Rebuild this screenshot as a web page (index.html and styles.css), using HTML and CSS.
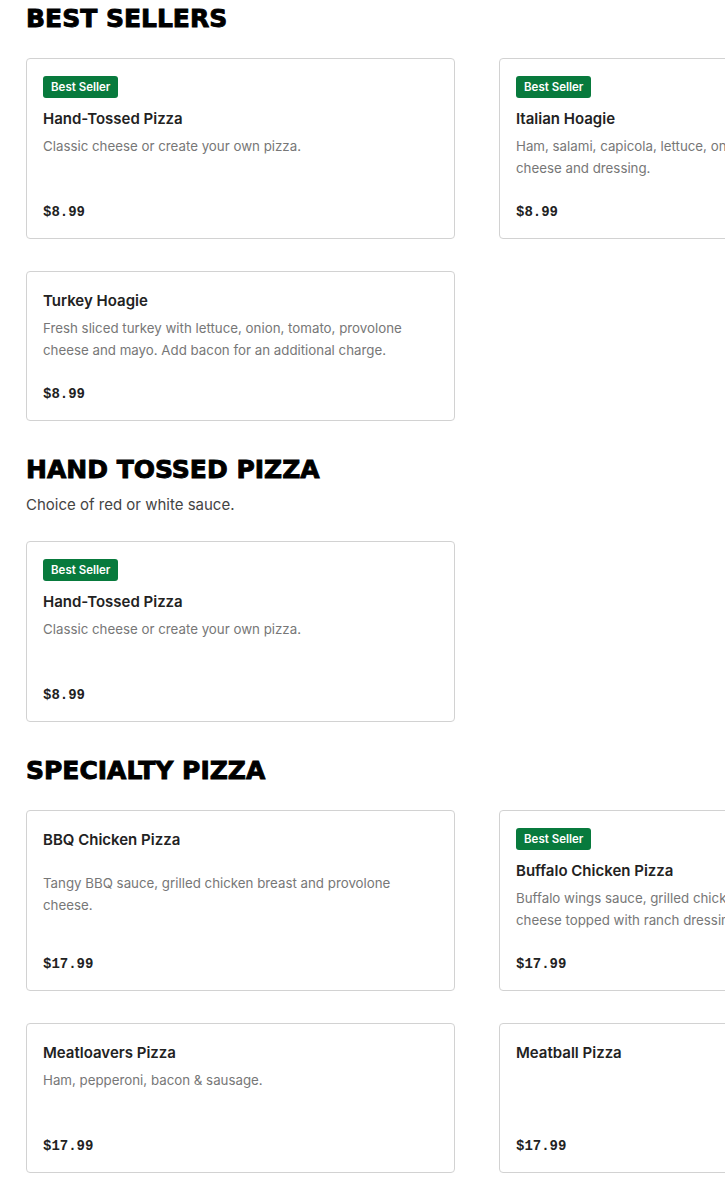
FILE: index.html
```html
<!DOCTYPE html>
<html lang="en">
<head>
<meta charset="utf-8">
<title>Menu</title>
<link rel="stylesheet" href="styles.css">
</head>
<body>
<main class="menu">
  <section class="section">
    <h2 class="section-title">BEST SELLERS</h2>
    <div class="grid">
      <article class="card">
        <span class="badge">Best Seller</span>
        <h3 class="item-name">Hand-Tossed Pizza</h3>
        <p class="item-desc">Classic cheese or create your own pizza.</p>
        <div class="price">$8.99</div>
      </article>
      <article class="card">
        <span class="badge">Best Seller</span>
        <h3 class="item-name">Italian Hoagie</h3>
        <p class="item-desc">Ham, salami, capicola, lettuce, onion, tomato, provolone cheese and dressing.</p>
        <div class="price">$8.99</div>
      </article>
      <article class="card">
        <h3 class="item-name">Turkey Hoagie</h3>
        <p class="item-desc">Fresh sliced turkey with lettuce, onion, tomato, provolone cheese and mayo. Add bacon for an additional charge.</p>
        <div class="price">$8.99</div>
      </article>
    </div>
  </section>

  <section class="section">
    <h2 class="section-title">HAND TOSSED PIZZA</h2>
    <p class="section-desc">Choice of red or white sauce.</p>
    <div class="grid">
      <article class="card">
        <span class="badge">Best Seller</span>
        <h3 class="item-name">Hand-Tossed Pizza</h3>
        <p class="item-desc">Classic cheese or create your own pizza.</p>
        <div class="price">$8.99</div>
      </article>
    </div>
  </section>

  <section class="section">
    <h2 class="section-title">SPECIALTY PIZZA</h2>
    <div class="grid">
      <article class="card card-spaced">
        <h3 class="item-name">BBQ Chicken Pizza</h3>
        <p class="item-desc">Tangy BBQ sauce, grilled chicken breast and provolone cheese.</p>
        <div class="price">$17.99</div>
      </article>
      <article class="card">
        <span class="badge">Best Seller</span>
        <h3 class="item-name">Buffalo Chicken Pizza</h3>
        <p class="item-desc">Buffalo wings sauce, grilled chicken breast and provolone cheese topped with ranch dressing.</p>
        <div class="price">$17.99</div>
      </article>
      <article class="card">
        <h3 class="item-name">Meatloavers Pizza</h3>
        <p class="item-desc">Ham, pepperoni, bacon &amp; sausage.</p>
        <div class="price">$17.99</div>
      </article>
      <article class="card">
        <h3 class="item-name">Meatball Pizza</h3>
        <p class="item-desc"></p>
        <div class="price">$17.99</div>
      </article>
    </div>
  </section>
</main>
</body>
</html>
```

FILE: styles.css
```css
html, body {
  margin: 0;
  padding: 0;
  background: #ffffff;
  overflow-x: hidden;
}

body {
  font-family: Inter, "Liberation Sans", sans-serif;
  color: #222222;
}

.menu {
  padding: 3px 0 40px 26px;
  display: flex;
  flex-direction: column;
  gap: 33px;
  width: 902px;
}

.section {
  display: flex;
  flex-direction: column;
}

.section-title {
  margin: 0 0 25px 0;
  padding-top: 2px;
  height: 28px;
  font-family: "DejaVu Sans", "Liberation Sans", sans-serif;
  font-weight: 900;
  font-size: 25px;
  line-height: 28px;
  color: #000000;
  letter-spacing: 0;
  -webkit-text-stroke: 0.9px #000000;
  box-sizing: content-box;
}

.section-desc {
  margin: -15px 0 25px 0;
  font-size: 15px;
  line-height: 22px;
  color: #444444;
}

.grid {
  display: grid;
  grid-template-columns: 429px 429px;
  column-gap: 44px;
  row-gap: 32px;
}

.card {
  display: flex;
  flex-direction: column;
  align-items: flex-start;
  border: 1px solid #d2d2d2;
  border-radius: 4px;
  padding: 17px 16px 15px 16px;
  box-sizing: border-box;
}

.badge {
  display: inline-block;
  background: #087a3d;
  color: #ffffff;
  font-size: 11.5px;
  font-weight: 600;
  line-height: 22px;
  height: 22px;
  padding: 0 8px;
  border-radius: 3px;
  margin-bottom: 9px;
}

.item-name {
  margin: 0;
  font-size: 15px;
  font-weight: 600;
  line-height: 24px;
  color: #222222;
}

.item-desc {
  margin: 4px 0 0 0;
  padding-right: 20px;
  font-size: 13.3px;
  line-height: 22px;
  color: #777777;
  min-height: 44px;
}

.card-spaced .item-desc {
  margin-top: 20px;
}

.price {
  margin-top: auto;
  padding-top: 22px;
  font-family: "Liberation Mono", "DejaVu Sans Mono", monospace;
  font-weight: 700;
  font-size: 14px;
  line-height: 22px;
  color: #222222;
}
```
